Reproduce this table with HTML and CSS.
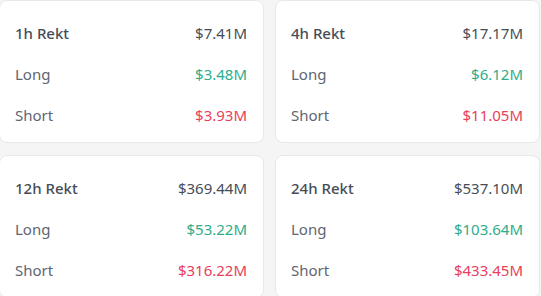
FILE: index.html
```html
<!DOCTYPE html>
<html>
<head>
<meta charset="utf-8">
<link rel="stylesheet" href="styles.css">
</head>
<body>
<div class="grid">
  <div class="card">
    <div class="row head"><span class="label">1h Rekt</span><span class="val">$7.41M</span></div>
    <div class="row"><span class="label">Long</span><span class="val up">$3.48M</span></div>
    <div class="row"><span class="label">Short</span><span class="val down">$3.93M</span></div>
  </div>
  <div class="card">
    <div class="row head"><span class="label">4h Rekt</span><span class="val">$17.17M</span></div>
    <div class="row"><span class="label">Long</span><span class="val up">$6.12M</span></div>
    <div class="row"><span class="label">Short</span><span class="val down">$11.05M</span></div>
  </div>
  <div class="card">
    <div class="row head"><span class="label">12h Rekt</span><span class="val">$369.44M</span></div>
    <div class="row"><span class="label">Long</span><span class="val up">$53.22M</span></div>
    <div class="row"><span class="label">Short</span><span class="val down">$316.22M</span></div>
  </div>
  <div class="card">
    <div class="row head"><span class="label">24h Rekt</span><span class="val">$537.10M</span></div>
    <div class="row"><span class="label">Long</span><span class="val up">$103.64M</span></div>
    <div class="row"><span class="label">Short</span><span class="val down">$433.45M</span></div>
  </div>
</div>
</body>
</html>
```
FILE: styles.css
```css
html, body {
  margin: 0;
  padding: 0;
  background: #f5f5f5;
  font-family: "Noto Sans", "Open Sans", sans-serif;
  font-size: 15px;
  color: #474d57;
}
.grid {
  display: grid;
  grid-template-columns: 265px 265px;
  column-gap: 11px;
  row-gap: 12px;
  margin-left: -1px;
}
.card {
  background: #fff;
  border: 1px solid #e8e8e8;
  border-radius: 8px;
  padding: 12px 16px 7px 15px;
  height: 143px;
  box-sizing: border-box;
  display: flex;
  flex-direction: column;
}
.row {
  height: 41px;
  display: flex;
  align-items: center;
  justify-content: space-between;
}
.label {
  color: #5e6673;
}
.head .label {
  color: #474d57;
  font-weight: 500;
}
.val {
  color: #474d57;
}
.up { color: #2ead8a; }
.down { color: #e8415a; }
```
